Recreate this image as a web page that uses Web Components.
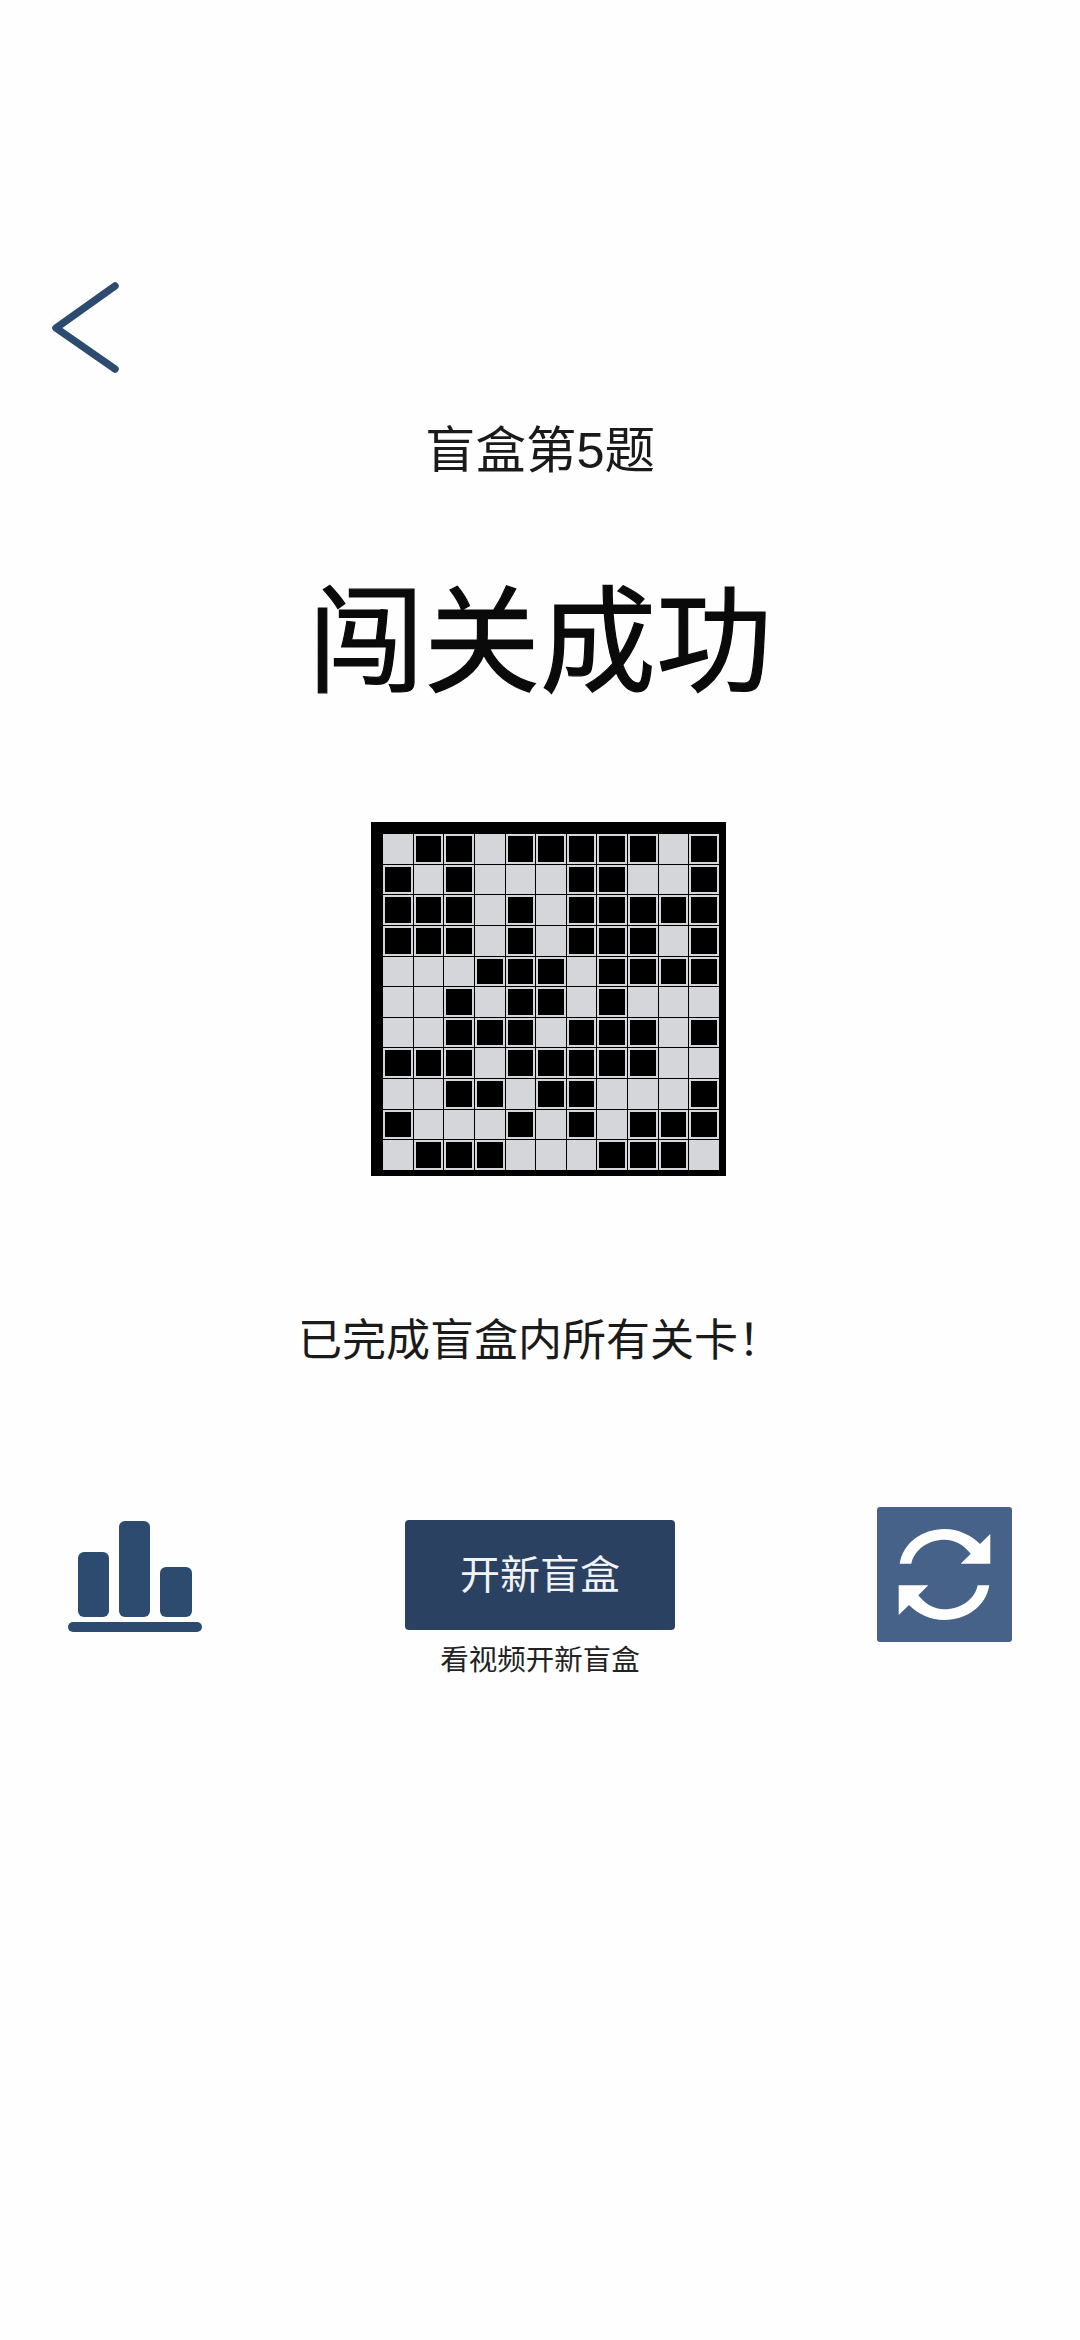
<!DOCTYPE html>
<html lang="zh-CN">
<head>
<meta charset="utf-8">
<title>闯关成功</title>
<style>
	html, body { margin: 0; padding: 0; background: #fefefe; }
	body { font-family: "Noto Sans CJK SC", "Noto Sans", sans-serif; color: #111; }
</style>
</head>
<body>
<result-screen>
	<back-button></back-button>
	<level-title>盲盒第5题</level-title>
	<big-title>闯关成功</big-title>
	<nono-board rows="01101111101,10100011001,11101011111,11101011101,00011101111,00101101000,00111011101,11101111100,00110110001,10001010111,01110001110"></nono-board>
	<status-line>已完成盲盒内所有关卡&#xFF01;</status-line>
	<action-row>
		<rank-icon slot="left"></rank-icon>
		<open-box slot="middle" hint="看视频开新盲盒">开新盲盒</open-box>
		<refresh-icon slot="right"></refresh-icon>
	</action-row>
</result-screen>

<script>
// page column, everything flows from top to bottom
customElements.define('result-screen', class extends HTMLElement {
	constructor() {
		super();
		this.attachShadow({ mode: 'open' });
		this.shadowRoot.innerHTML = `
			<style>
			:host {
				display: flex;
				flex-direction: column;
				align-items: center;
				box-sizing: border-box;
				width: 1080px;
				min-height: 2340px;
				padding-top: 280px;
				background: #fefefe;
			}
			</style>
			<slot></slot>
		`;
	}
});

customElements.define('back-button', class extends HTMLElement {
	constructor() {
		super();
		this.attachShadow({ mode: 'open' });
		this.shadowRoot.innerHTML = `
			<style>
			:host { display: block; align-self: stretch; height: 95px; padding-left: 50px; }
			svg { display: block; }
			</style>
			<svg width="72" height="95" viewBox="0 0 72 95" aria-hidden="true">
				<path d="M65 6 L6 48 L65 89" fill="none" stroke="#2d4a6f" stroke-width="7.5" stroke-linecap="round" stroke-linejoin="round"/>
			</svg>
		`;
	}
});

customElements.define('level-title', class extends HTMLElement {
	constructor() {
		super();
		this.attachShadow({ mode: 'open' });
		this.shadowRoot.innerHTML = `
			<style>
			:host {
				display: block;
				margin-top: 46px;
				font-family: "Liberation Sans", "Noto Sans CJK SC", sans-serif;
				font-size: 50.5px;
				line-height: 60px;
				color: #1a1a1a;
			}
			</style>
			<slot></slot>
		`;
	}
});

customElements.define('big-title', class extends HTMLElement {
	constructor() {
		super();
		this.attachShadow({ mode: 'open' });
		this.shadowRoot.innerHTML = `
			<style>
			:host {
				display: block;
				margin-top: 81px;
				font-size: 116px;
				line-height: 140px;
				color: #0a0a0a;
				-webkit-text-stroke: 1.2px #0a0a0a;
			}
			</style>
			<slot></slot>
		`;
	}
});

// the solved puzzle, rows come in as strings of 0 and 1
customElements.define('nono-board', class extends HTMLElement {
	constructor() {
		super();
		this.attachShadow({ mode: 'open' });
		const rows = (this.getAttribute('rows') || '').split(',');
		const cells = rows.map(row => [...row].map(c => `<i class="${c === '1' ? 'on' : ''}"></i>`).join('')).join('');
		this.shadowRoot.innerHTML = `
			<style>
			:host {
				display: block;
				box-sizing: border-box;
				width: 355px;
				height: 354px;
				margin-top: 120px;
				margin-left: 17px;
				padding: 12px 7px 6px 12px;
				background: #000;
			}
			.grid {
				display: grid;
				grid-template-columns: repeat(11, 1fr);
				grid-template-rows: repeat(11, 1fr);
				gap: 1px;
				height: 100%;
			}
			i { display: block; box-sizing: border-box; background: #d5d6da; }
			i.on { background: #000; border: 2px solid #d5d6da; }
			</style>
			<div class="grid">${cells}</div>
		`;
	}
});

customElements.define('status-line', class extends HTMLElement {
	constructor() {
		super();
		this.attachShadow({ mode: 'open' });
		this.shadowRoot.innerHTML = `
			<style>
			:host { display: block; margin-top: 131px; font-size: 44px; line-height: 60px; color: #1a1a1a; }
			</style>
			<slot></slot>
		`;
	}
});

customElements.define('action-row', class extends HTMLElement {
	constructor() {
		super();
		this.attachShadow({ mode: 'open' });
		this.shadowRoot.innerHTML = `
			<style>
			:host {
				display: grid;
				grid-template-columns: 1fr 270px 1fr;
				align-items: start;
				align-self: stretch;
				margin-top: 140px;
				padding: 0 68px;
			}
			.right { justify-self: end; }
			</style>
			<div><slot name="left"></slot></div>
			<div><slot name="middle"></slot></div>
			<div class="right"><slot name="right"></slot></div>
		`;
	}
});

customElements.define('rank-icon', class extends HTMLElement {
	constructor() {
		super();
		this.attachShadow({ mode: 'open' });
		this.shadowRoot.innerHTML = `
			<style>
			:host { display: block; width: 134px; height: 111px; margin-top: 14px; }
			svg { display: block; }
			</style>
			<svg width="134" height="111" viewBox="0 0 134 111" fill="#2d4a6f" aria-hidden="true">
				<rect x="10" y="31" width="31" height="65" rx="6"/>
				<rect x="51" y="0" width="31" height="96" rx="6"/>
				<rect x="92" y="46" width="32" height="50" rx="6"/>
				<rect x="0" y="101" width="134" height="10" rx="5"/>
			</svg>
		`;
	}
});

customElements.define('open-box', class extends HTMLElement {
	constructor() {
		super();
		this.attachShadow({ mode: 'open' });
		this.shadowRoot.innerHTML = `
			<style>
			:host { display: flex; flex-direction: column; margin-top: 13px; }
			button {
				height: 110px;
				padding: 0 0 6px;
				border: 0;
				border-radius: 4px;
				background: #2b4162;
				color: #f2f3f5;
				font: inherit;
				font-size: 40px;
			}
			p {
				margin: 8px 0 0;
				font-size: 28.5px;
				line-height: 40px;
				text-align: center;
				color: #222;
			}
			</style>
			<button><slot></slot></button>
			<p>${this.getAttribute('hint') || ''}</p>
		`;
	}
});

customElements.define('refresh-icon', class extends HTMLElement {
	constructor() {
		super();
		this.attachShadow({ mode: 'open' });
		this.shadowRoot.innerHTML = `
			<style>
			:host { display: block; width: 135px; height: 135px; background: #466289; border-radius: 3px; }
			svg { display: block; }
			</style>
			<svg width="135" height="135" viewBox="0 0 135 135" fill="#fff" aria-hidden="true">
				<path d="M22.7 56.7 C26 36 45 22 67.7 22 C81 22 94 28 103 37 L113.3 27 V56.7 H83.7 L93.7 46.7 C87 38 78 32.7 67.7 32.7 C51 32.7 37 43 34.3 56.7 Z"/>
				<path d="M112.3 78.3 C109 99 90 113 67.3 113 C54 113 41 107 32 98 L21.7 108 V78.3 H51.3 L41.3 88.3 C48 97 57 102.3 67.3 102.3 C84 102.3 98 92 100.7 78.3 Z"/>
			</svg>
		`;
	}
});
</script>
</body>
</html>
